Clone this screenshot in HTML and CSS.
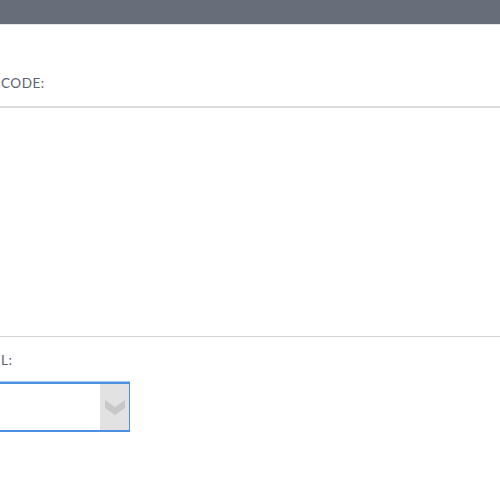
FILE: index.html
```html
<!DOCTYPE html>
<html>
<head>
<meta charset="utf-8">
<link rel="stylesheet" href="styles.css">
</head>
<body>
<header class="topbar"></header>
<section class="field field-code">
  <label class="label">CODE:</label>
</section>
<div class="spacer"></div>
<section class="field field-select">
  <label class="label">L:</label>
  <div class="select">
    <div class="select-value"></div>
    <div class="select-arrow">
      <svg width="22" height="20" viewBox="0 0 22 20"><path d="M1 3 L11 10 L21 3 L21 11 L11 18 L1 11 Z" fill="#c8c8c8"/></svg>
    </div>
  </div>
</section>
</body>
</html>
```
FILE: styles.css
```css
html, body {
  margin: 0;
  padding: 0;
  background: #ffffff;
  font-family: Lato, "Open Sans", "Liberation Sans", sans-serif;
}
.topbar {
  height: 24px;
  background: #686e79;
  border-bottom: 1px solid #e6e7e9;
}
.field-code {
  height: 81px;
  display: flex;
  align-items: flex-end;
  border-bottom: 2px solid #dcdcdc;
}
.label {
  display: block;
  font-size: 13.5px;
  letter-spacing: 0.5px;
  color: #5c6370;
  padding-left: 1px;
}
.field-code .label {
  padding-bottom: 15px;
}
.spacer {
  height: 228px;
  border-bottom: 1px solid #d4d4d4;
}
.field-select {
  padding-top: 13px;
}
.field-select .label {
  height: 20px;
  line-height: 20px;
}
.select {
  margin-top: 12px;
  width: 129px;
  height: 46px;
  display: flex;
  border-top: 2px solid #4a8fe0;
  border-bottom: 2px solid #4a8fe0;
  border-right: 1px solid #4a8fe0;
  box-shadow: 0 -1px 0 #a9cbf3, 0 1px 0 #a9cbf3;
}
.select-value {
  flex: 1;
  background: #fff;
}
.select-arrow {
  width: 29px;
  background: #e2e2e2;
  display: flex;
  align-items: center;
  justify-content: center;
}
.select-arrow svg {
  display: block;
}
```
